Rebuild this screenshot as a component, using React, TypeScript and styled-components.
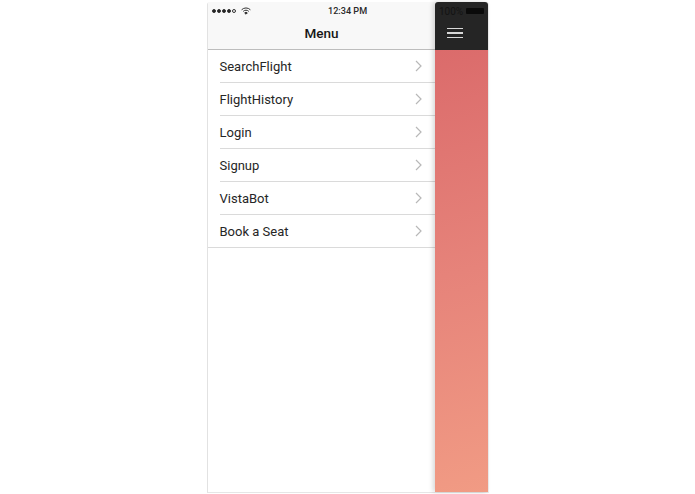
import React from 'react';
import styled, { createGlobalStyle } from 'styled-components';

const GlobalStyle = createGlobalStyle`
  html, body {
    margin: 0;
    padding: 0;
    background: #fff;
    font-family: Roboto, "Liberation Sans", Arial, sans-serif;
  }
`;

const Page = styled.div`
  width: 695px;
  height: 494px;
  box-sizing: border-box;
  padding: 2px 0 0 207px;
  overflow: hidden;
`;

const Phone = styled.div`
  width: 282px;
  height: 491px;
  display: flex;
  border-left: 1px solid #e2e2e2;
  border-right: 1px solid #eeeeee;
  border-bottom: 1px solid #e6e6e6;
  border-radius: 3px 3px 0 0;
  box-sizing: border-box;
`;

const MenuPane = styled.div`
  width: 227px;
  flex: none;
  display: flex;
  flex-direction: column;
  background: #fff;
`;

const NavHeader = styled.div`
  height: 48px;
  flex: none;
  box-sizing: border-box;
  background: #f8f8f8;
  border-bottom: 1px solid #bdbdbd;
  display: flex;
  flex-direction: column;
`;

const StatusBar = styled.div`
  height: 17px;
  display: flex;
  align-items: center;
  padding: 1px 0 0 4px;
  box-sizing: border-box;
  position: relative;
`;

const Dots = styled.div`
  display: flex;
  gap: 1px;
  margin-right: 5px;
`;

const Dot = styled.span<{ $empty?: boolean }>`
  width: 4px;
  height: 4px;
  box-sizing: border-box;
  border-radius: 50%;
  background: ${p => (p.$empty ? 'transparent' : '#222')};
  border: 1px solid #333;
`;

const Clock = styled.div`
  position: absolute;
  left: 120px;
  top: 3px;
  font-size: 9.1px;
  font-weight: 500;
  line-height: 12px;
  color: #2a2a2a;
  white-space: nowrap;
`;

const NavTitle = styled.div`
  flex: 1;
  display: flex;
  align-items: center;
  justify-content: center;
  font-size: 13.5px;
  font-weight: 500;
  color: #161616;
  padding-bottom: 2px;
`;

const MenuList = styled.div`
  display: flex;
  flex-direction: column;
`;

const Row = styled.div<{ $last?: boolean }>`
  height: 33px;
  box-sizing: border-box;
  margin-left: ${p => (p.$last ? 0 : '11.5px')};
  padding: 0 13px 0 ${p => (p.$last ? '11.5px' : 0)};
  border-bottom: 1px solid #dadada;
  display: flex;
  align-items: center;
  justify-content: space-between;
  font-size: 13px;
  color: #262626;
`;

const SidePane = styled.div`
  width: 53px;
  flex: none;
  display: flex;
  flex-direction: column;
  box-shadow: -2px 0 5px rgba(0, 0, 0, 0.16);
  border-radius: 3px 3px 0 0;
  overflow: hidden;
`;

const SideHeader = styled.div`
  height: 48px;
  flex: none;
  background: #252525;
  display: flex;
  flex-direction: column;
  align-items: flex-start;
`;

const SideStatus = styled.div`
  height: 17px;
  width: 100%;
  display: flex;
  align-items: center;
  padding: 1px 0 0 4px;
  box-sizing: border-box;
  font-size: 10px;
  color: #131313;
  gap: 3px;
`;

const Battery = styled.span`
  width: 18px;
  height: 6px;
  background: #0a0a0a;
  border-radius: 1px;
`;

const Burger = styled.div`
  margin: 9px 0 0 12px;
  display: flex;
  flex-direction: column;
  gap: 3px;
`;

const BurgerLine = styled.span`
  width: 16px;
  height: 1.3px;
  background: #d8d8d8;
`;

const SideBody = styled.div`
  flex: 1;
  background: linear-gradient(165deg, #db6b6b 0%, #e6837a 50%, #f19b84 100%);
`;

const items = ['SearchFlight', 'FlightHistory', 'Login', 'Signup', 'VistaBot', 'Book a Seat'];

const Chevron = () => (
  <svg width="7" height="12" viewBox="0 0 7 12" fill="none">
    <path d="M1 1l5 5-5 5" stroke="#b8b8b8" strokeWidth="1.2" />
  </svg>
);

const Wifi = () => (
  <svg width="10" height="8" viewBox="0 0 10 8" fill="none" stroke="#333" strokeWidth="1">
    <path d="M.6 2.8a6.2 6.2 0 0 1 8.8 0" />
    <path d="M2.2 4.4a3.9 3.9 0 0 1 5.6 0" />
    <path d="M3.7 5.9a1.8 1.8 0 0 1 2.6 0L5 7.2z" fill="#333" />
  </svg>
);

const App: React.FC = () => (
  <>
    <GlobalStyle />
    <Page>
      <Phone>
        <MenuPane>
          <NavHeader>
            <StatusBar>
              <Dots>
                <Dot />
                <Dot />
                <Dot />
                <Dot />
                <Dot $empty />
              </Dots>
              <Wifi />
              <Clock>12:34 PM</Clock>
            </StatusBar>
            <NavTitle>Menu</NavTitle>
          </NavHeader>
          <MenuList>
            {items.map((item, i) => (
              <Row key={item} $last={i === items.length - 1}>
                {item}
                <Chevron />
              </Row>
            ))}
          </MenuList>
        </MenuPane>
        <SidePane>
          <SideHeader>
            <SideStatus>
              100%
              <Battery />
            </SideStatus>
            <Burger>
              <BurgerLine />
              <BurgerLine />
              <BurgerLine />
            </Burger>
          </SideHeader>
          <SideBody />
        </SidePane>
      </Phone>
    </Page>
  </>
);

export default App;
